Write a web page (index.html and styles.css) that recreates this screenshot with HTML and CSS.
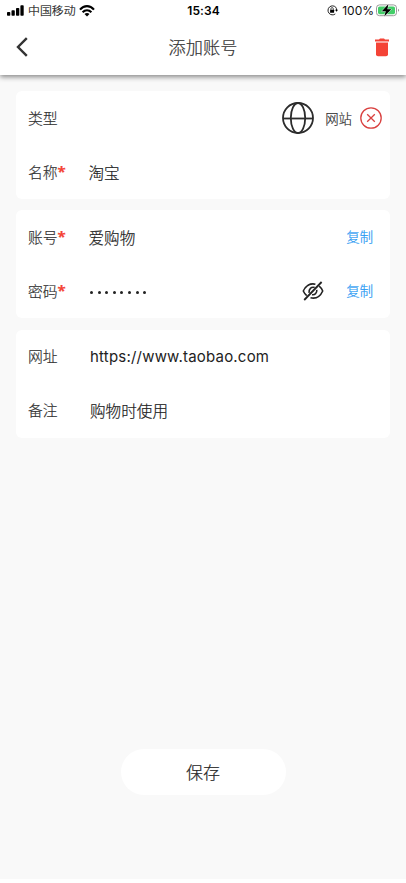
FILE: index.html
```html
<!DOCTYPE html>
<html lang="zh-CN">
<head>
<meta charset="utf-8">
<title>添加账号</title>
<link rel="stylesheet" href="styles.css">
</head>
<body>
<div class="screen">
  <header class="top">
    <div class="status">
      <div class="status-left">
        <svg class="signal" width="18" height="11" viewBox="0 0 18 11"><rect x="0" y="7" width="3.3" height="3.7" rx=".8"/><rect x="4.5" y="5.3" width="3.3" height="5.4" rx=".8"/><rect x="9" y="3" width="3.3" height="7.7" rx=".8"/><rect x="13.4" y="0.2" width="3.3" height="10.5" rx=".8"/></svg>
        <span class="carrier">中国移动</span>
        <svg class="wifi" width="16" height="12" viewBox="0 0 16 12"><g fill="none" stroke="#000" stroke-width="2.1"><path d="M1 4.6C5-.1 11-.1 15 4.6"/><path d="M3.6 7.3c2.6-2.8 6.2-2.8 8.8 0"/></g><path d="M8 11.5 5.5 9c1.5-1.3 3.5-1.3 5 0z"/></svg>
      </div>
      <span class="time">15:34</span>
      <div class="status-right">
        <svg width="11" height="11" viewBox="0 0 11 11"><path d="M8.8 2.3A4.5 4.5 0 1 0 8.3 8.9" fill="none" stroke="#222" stroke-width="1"/><path d="M8.8 2.3A4.5 4.5 0 0 1 9.6 5" fill="none" stroke="#222"/><path d="M8 4.8h3L9.6 6.8z"/><rect x="3.1" y="4.8" width="4" height="3" rx=".4"/><path d="M3.9 5V3.8a1.2 1.2 0 0 1 2.4 0V5" fill="none" stroke="#222" stroke-width=".8"/></svg>
        <span class="percent">100%</span>
        <svg width="24" height="13" viewBox="0 0 24 13"><rect x=".5" y=".9" width="20" height="10.8" rx="3" fill="#fff" stroke="#999"/><rect x="2" y="2.4" width="17" height="7.8" rx="1.7" fill="#42ce68"/><path d="M22 4.8v3c1.5-.6 1.5-2.4 0-3z" fill="#999"/><path d="M12.5 0 5.8 7.2h4L8.2 12.5 15.3 5.3h-4z" stroke="#fff" stroke-width=".8" paint-order="stroke"/></svg>
      </div>
    </div>
    <div class="nav">
      <svg width="12" height="20" viewBox="0 0 12 20"><path d="M10.8 1.2 2 10l8.8 8.8" fill="none" stroke="#333" stroke-width="2.4"/></svg>
      <h1>添加账号</h1>
      <svg width="14" height="19" viewBox="0 0 14 19"><path d="M0 1.5h4L5 .5h4l1 1h4v2H0z" fill="#f44336"/><path d="M1 4.5h12v11.8a2 2 0 0 1-2 2H3a2 2 0 0 1-2-2z" fill="#f44336"/><path d="M1 3.5h12v1H1z" fill="#f9aaa4"/></svg>
    </div>
  </header>
  <main>
    <section class="card">
      <div class="row">
        <span class="label">类型</span>
        <span class="value"></span>
        <svg width="32" height="32" viewBox="0 0 32 32" fill="none" stroke="#2c2c2c" stroke-width="1.8"><circle cx="16" cy="16" r="15"/><ellipse cx="16" cy="16" rx="7.2" ry="15"/><path d="M1 16.5h30"/></svg>
        <span class="kind">网站</span>
        <svg class="clear" width="22" height="22" viewBox="0 0 22 22" fill="none" stroke="#d9403f" stroke-width="1.3"><circle cx="11" cy="11" r="10.2"/><path d="m7.2 7.2 7.6 7.6m0-7.6-7.6 7.6"/></svg>
      </div>
      <div class="row"><span class="label">名称<b>*</b></span><span class="value">淘宝</span></div>
    </section>
    <section class="card">
      <div class="row"><span class="label">账号<b>*</b></span><span class="value">爱购物</span><span class="copy">复制</span></div>
      <div class="row">
        <span class="label">密码<b>*</b></span>
        <span class="value dots"><i></i><i></i><i></i><i></i><i></i><i></i><i></i><i></i></span>
        <svg class="eye" width="22" height="20" viewBox="0 0 22 20" fill="none" stroke="#222" stroke-width="1.6"><path d="M13.4 3.2C8 1.9 3.5 5 1.3 10c.9 2 2 3.5 3.4 4.7M17.2 5.1c1.5 1.2 2.7 2.8 3.5 4.9-2.4 5.4-7 8-12.2 6.8"/><path d="M12.7 6.5C9.3 5.4 6.6 8 7.1 11.8M14.8 8.9c.3 3.2-2 5.3-4.8 4.8"/><path d="M19.6 1 2.2 19" stroke-width="1.8"/></svg>
        <span class="copy">复制</span>
      </div>
    </section>
    <section class="card wide">
      <div class="row"><span class="label">网址</span><span class="value url">https://www.taobao.com</span></div>
      <div class="row"><span class="label">备注</span><span class="value">购物时使用</span></div>
    </section>
  </main>
  <button class="save">保存</button>
</div>
</body>
</html>
```
FILE: styles.css
```css
* { box-sizing: border-box; }
body { margin: 0; background: #fff; color: #333; font-family: "Noto Sans CJK SC", sans-serif; font-weight: 300; -webkit-text-stroke: .2px; }
svg { display: block; flex: none; }
.screen { height: 879px; background: #f9f9f9; display: flex; flex-direction: column; align-items: center; }
.top { width: 100%; height: 75px; background: #fff; box-shadow: 0 2px 5px rgba(0, 0, 0, .46); }
.status { height: 21px; padding: 0 6px 0 7px; display: grid; grid-template-columns: 1fr auto 1fr; align-items: center; color: #111; }
.status-left, .status-right { display: flex; align-items: center; }
.status-right { justify-content: flex-end; }
.carrier { margin: 0 3px 0 3px; padding-bottom: 1px; font-size: 11.9px; line-height: 20px; }
.time { font: 600 12px/20px Inter, sans-serif; letter-spacing: .1px; color: #000; -webkit-text-stroke: 0; }
.percent { margin: 0 2px 0 4px; font: 400 12px/20px Inter, sans-serif; -webkit-text-stroke: 0; }
.nav { height: 54px; padding: 0 17px 2px 16px; display: flex; align-items: center; justify-content: space-between; }
h1 { margin: 0 0 0 3px; font-size: 17.2px; line-height: 26px; font-weight: 300; }
main { width: 374px; margin-top: 16px; display: flex; flex-direction: column; gap: 11.4px; }
.card { height: 108px; background: #fff; border-radius: 6px; }
.row { height: 54px; padding: 0 8px 0 12px; display: flex; align-items: center; }
.label { width: 60.5px; padding-bottom: 1px; font-size: 14.8px; line-height: 24px; white-space: nowrap; }
.wide .label { width: 62px; padding-bottom: 2px; }
.label b { position: relative; top: -1px; color: #f44336; font: 700 15px/20px "Open Sans", sans-serif; }
.value { flex: 1; padding-bottom: 1px; font-size: 15.6px; line-height: 24px; color: #222; }
.url { padding-bottom: 0; font-family: Inter, sans-serif; font-weight: 400; font-size: 15px; letter-spacing: .2px; -webkit-text-stroke: 0; }
.wide .value:not(.url) { padding-bottom: 2px; }
.kind { margin: 0 8px 0 11px; padding-bottom: 1px; font-size: 13.4px; }
.copy { margin-right: 9px; padding-bottom: 1px; font-size: 13.3px; color: #2196f3; }
.eye { margin-right: 22px; }
.dots { display: flex; gap: 4.6px; padding: 3px 0 0 1.5px; }
.dots i { width: 3px; height: 3px; border-radius: 50%; background: #222; }
.save { width: 165px; height: 46px; margin-top: 311px; padding: 0; border: 0; border-radius: 23px; background: #fff; color: #222; font: 300 17px/26px "Noto Sans CJK SC", sans-serif; -webkit-text-stroke: .2px; }
```
